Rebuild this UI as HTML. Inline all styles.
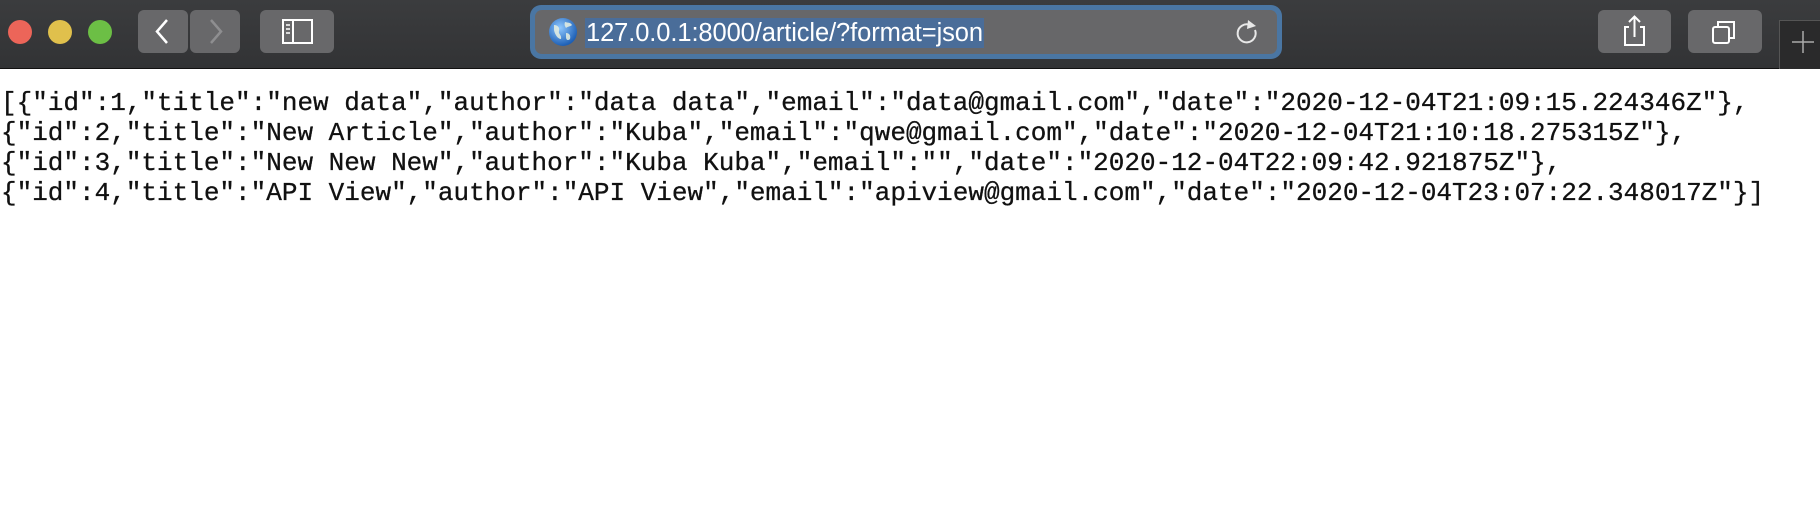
<!DOCTYPE html>
<html><head><meta charset="utf-8"><style>
html,body{margin:0;padding:0;width:1820px;height:524px;background:#fff;overflow:hidden;}
.tb{position:absolute;left:0;top:0;width:1820px;height:68px;background:linear-gradient(#3b3c3e,#323335);border-bottom:1px solid #111;}
.dot{position:absolute;top:20px;width:24px;height:24px;border-radius:50%;}
.btn{position:absolute;top:10px;height:43px;background:#68686a;border-radius:6px;}
.url{position:absolute;left:530px;top:5px;width:752px;height:54px;border-radius:11px;background:#4a76a3;}
.url .in{position:absolute;left:5px;top:5px;right:5px;bottom:5px;background:#676769;border-radius:7px;}
.txt{position:absolute;left:50px;top:8px;height:30px;background:#4a6d99;color:#fff;font:25.5px "Liberation Sans",sans-serif;line-height:30px;padding:0 1px;letter-spacing:-0.1px;}
pre{position:absolute;left:1px;top:88px;margin:0;font:26px "Liberation Mono",monospace;line-height:30px;color:#111;-webkit-text-stroke:0.3px #111;}
</style></head><body>
<div class="tb">
 <div class="dot" style="left:8px;background:#ec6559"></div>
 <div class="dot" style="left:48px;background:#e0c04c"></div>
 <div class="dot" style="left:88px;background:#6cbf45"></div>
 <div class="btn" style="left:138px;width:50px"><svg width="50" height="43"><path d="M29 10 L19 21.5 L29 33" stroke="#fff" stroke-width="2.5" fill="none"/></svg></div>
 <div class="btn" style="left:190px;width:50px"><svg width="50" height="43"><path d="M21 10 L31 21.5 L21 33" stroke="#8e8e90" stroke-width="2.5" fill="none"/></svg></div>
 <div class="btn" style="left:260px;width:74px"><svg width="74" height="43"><rect x="23" y="10" width="29" height="23" stroke="#fff" stroke-width="2" fill="none"/><line x1="33" y1="10" x2="33" y2="33" stroke="#fff" stroke-width="2"/><path d="M26 15h4M26 19h4M26 23h4" stroke="#fff" stroke-width="1.5"/></svg></div>
 <div class="url"><div class="in">
  <svg style="position:absolute;left:13px;top:7px" width="30" height="30"><defs><radialGradient id="g" cx="40%" cy="35%" r="65%"><stop offset="0" stop-color="#8fc8ff"/><stop offset="1" stop-color="#1d5fb5"/></radialGradient></defs><circle cx="15" cy="15" r="14" fill="url(#g)"/><path d="M6 8c4 0 6 3 5 6s3 4 2 8c-3 0-6-4-7-9zM17 5c3 1 5 0 7 3-2 2-4 1-6 3-1-2-2-3-1-6zM18 16c3 0 5 2 4 6-2 2-4 1-4-2z" fill="#e8f0e0" opacity=".85"/></svg>
  <div class="txt">127.0.0.1:8000/article/?format=json</div>
  <svg style="position:absolute;right:14px;top:8px" width="30" height="30"><path d="M22 12 A9 9 0 1 1 17 7" stroke="#e8e8e8" stroke-width="2" fill="none"/><path d="M15 2 L23 8 L14 11 Z" fill="#e8e8e8"/></svg>
 </div></div>
 <div class="btn" style="left:1598px;width:73px"><svg width="73" height="43"><path d="M31 17h-4v18h19v-18h-4" stroke="#fff" stroke-width="2" fill="none"/><path d="M36.5 27V7M31 12l5.5-5.5L42 12" stroke="#fff" stroke-width="2" fill="none"/></svg></div>
 <div class="btn" style="left:1688px;width:74px"><svg width="74" height="43"><rect x="25" y="17" width="16" height="16" rx="2" stroke="#fff" stroke-width="2" fill="none"/><path d="M30 17v-5h16v16h-5" stroke="#fff" stroke-width="2" fill="none"/></svg></div>
 <div style="position:absolute;left:1779px;top:20px;width:41px;height:48px;background:#2a2a2b;border-left:1px solid #555;border-top:1px solid #555"><svg width="41" height="48"><path d="M23 10v22M12 21h22" stroke="#aaa" stroke-width="1.5"/></svg></div>
</div>
<pre>[{"id":1,"title":"new data","author":"data data","email":"data@gmail.com","date":"2020-12-04T21:09:15.224346Z"},
{"id":2,"title":"New Article","author":"Kuba","email":"qwe@gmail.com","date":"2020-12-04T21:10:18.275315Z"},
{"id":3,"title":"New New New","author":"Kuba Kuba","email":"","date":"2020-12-04T22:09:42.921875Z"},
{"id":4,"title":"API View","author":"API View","email":"apiview@gmail.com","date":"2020-12-04T23:07:22.348017Z"}]</pre>
</body></html>
